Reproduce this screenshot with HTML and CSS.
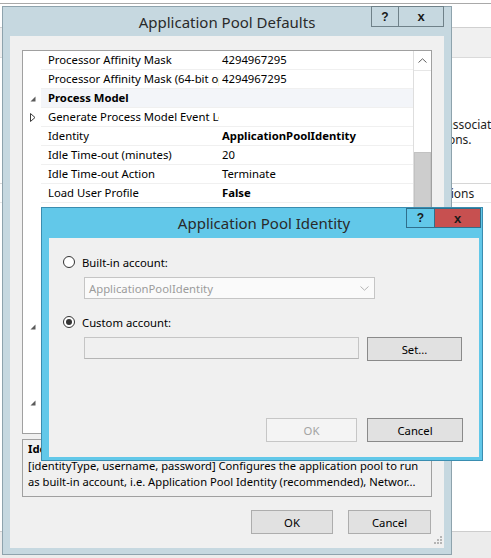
FILE: index.html
```html
<!DOCTYPE html>
<html>
<head>
<meta charset="utf-8">
<link rel="stylesheet" href="styles.css">
</head>
<body>
<div class="desk">
  <div class="bg">
    <div class="bg-top"></div>
    <div class="bg-head"></div>
    <div class="bg-tool"></div>
    <div class="bg-body">
      <div class="bg-line l1">associated with this</div>
      <div class="bg-line l2">actions.</div>
    </div>
    <div class="bg-row"><span class="bg-line l3">Actions</span></div>
    <div class="bg-fill"></div>
    <div class="bg-foot"></div>
  </div>

  <div class="win win-outer">
    <div class="titlebar">
      <div></div>
      <div class="title">Application Pool Defaults</div>
      <div class="tbtns">
        <div class="tb tb-help">?</div>
        <div class="tb tb-close">x</div>
      </div>
    </div>
    <div class="client outer-client">
      <div class="grid">
        <div class="rows">
          <div class="row"><span class="gut"></span><span class="lab">Processor Affinity Mask</span><span class="val">4294967295</span></div>
          <div class="row"><span class="gut"></span><span class="lab">Processor Affinity Mask (64-bit option)</span><span class="val">4294967295</span></div>
          <div class="row cat"><span class="gut"><svg width="6" height="6" viewBox="0 0 6 6"><polygon points="5.5,0.5 5.5,5.5 0.5,5.5" fill="#5a5a5a"/></svg></span><span class="lab b">Process Model</span><span class="val"></span></div>
          <div class="row"><span class="gut"><svg width="6" height="9" viewBox="0 0 6 9"><polygon points="0.5,0.5 5,4.5 0.5,8.5" fill="none" stroke="#3a3a3a" stroke-width="1"/></svg></span><span class="lab">Generate Process Model Event Log Entry</span><span class="val"></span></div>
          <div class="row"><span class="gut"></span><span class="lab">Identity</span><span class="val b">ApplicationPoolIdentity</span></div>
          <div class="row"><span class="gut"></span><span class="lab">Idle Time-out (minutes)</span><span class="val">20</span></div>
          <div class="row"><span class="gut"></span><span class="lab">Idle Time-out Action</span><span class="val">Terminate</span></div>
          <div class="row"><span class="gut"></span><span class="lab">Load User Profile</span><span class="val b">False</span></div>
          <div class="row"><span class="gut"></span><span class="lab">Maximum Worker Processes</span><span class="val">1</span></div>
          <div class="row"><span class="gut"></span><span class="lab">Ping Enabled</span><span class="val">True</span></div>
          <div class="row"><span class="gut"></span><span class="lab">Ping Maximum Response Time (seconds)</span><span class="val">90</span></div>
          <div class="row"><span class="gut"></span><span class="lab">Ping Period (seconds)</span><span class="val">30</span></div>
          <div class="row"><span class="gut"></span><span class="lab">Shutdown Time Limit (seconds)</span><span class="val">90</span></div>
          <div class="row"><span class="gut"></span><span class="lab">Startup Time Limit (seconds)</span><span class="val">90</span></div>
          <div class="row cat"><span class="gut"><svg width="6" height="6" viewBox="0 0 6 6"><polygon points="5.5,0.5 5.5,5.5 0.5,5.5" fill="#5a5a5a"/></svg></span><span class="lab b">Process Orphaning</span><span class="val"></span></div>
          <div class="row"><span class="gut"></span><span class="lab">Enabled</span><span class="val">False</span></div>
          <div class="row"><span class="gut"></span><span class="lab">Executable</span><span class="val"></span></div>
          <div class="row"><span class="gut"></span><span class="lab">Executable Parameters</span><span class="val"></span></div>
          <div class="row cat"><span class="gut"><svg width="6" height="6" viewBox="0 0 6 6"><polygon points="5.5,0.5 5.5,5.5 0.5,5.5" fill="#5a5a5a"/></svg></span><span class="lab b">Rapid-Fail Protection</span><span class="val"></span></div>
          <div class="row"><span class="gut"></span><span class="lab">"Service Unavailable" Response Type</span><span class="val">HttpLevel</span></div>
          <div class="row"><span class="gut"></span><span class="lab">Enabled</span><span class="val">True</span></div>
          <div class="row"><span class="gut"></span><span class="lab">Failure Interval (minutes)</span><span class="val">5</span></div>
        </div>
        <div class="sbar">
          <div class="sb-up"><svg width="9" height="5" viewBox="0 0 9 5"><polyline points="0.5,4.5 4.5,0.8 8.5,4.5" fill="none" stroke="#606060" stroke-width="1"/></svg></div>
          <div class="sb-track"></div>
          <div class="sb-thumb"></div>
        </div>
      </div>
      <div class="desc">
        <div class="desc-title">Identity</div>
        <div class="desc-text">[identityType, username, password] Configures the application pool to run</div>
        <div class="desc-text">as built-in account, i.e. Application Pool Identity (recommended), Networ...</div>
      </div>
      <div class="btnrow outer-btns">
        <div class="btn btn-ok">OK</div>
        <div class="btn btn-cancel">Cancel</div>
      </div>
      <div class="grip"><svg width="10" height="10" viewBox="0 0 10 10"><g fill="#b5b5b5"><rect x="8" y="0" width="2" height="2"/><rect x="5" y="3" width="2" height="2"/><rect x="8" y="3" width="2" height="2"/><rect x="2" y="6" width="2" height="2"/><rect x="5" y="6" width="2" height="2"/><rect x="8" y="6" width="2" height="2"/></g></svg></div>
    </div>
  </div>

  <div class="win win-inner">
    <div class="titlebar inner-titlebar">
      <div></div>
      <div class="title">Application Pool Identity</div>
      <div class="tbtns inner-tbtns">
        <div class="tb itb-help">?</div>
        <div class="tb itb-close">x</div>
      </div>
    </div>
    <div class="client inner-client">
      <div class="radio-row r1"><span class="radio"></span><span>Built-in account:</span></div>
      <div class="combo"><span>ApplicationPoolIdentity</span><svg width="9" height="5" viewBox="0 0 9 5"><polyline points="0.5,0.5 4.5,4.2 8.5,0.5" fill="none" stroke="#b4b4b4" stroke-width="1"/></svg></div>
      <div class="radio-row r2"><span class="radio on"></span><span>Custom account:</span></div>
      <div class="cust-row">
        <div class="textbox"></div>
        <div class="btn ibtn btn-set">Set...</div>
      </div>
      <div class="btnrow inner-btns">
        <div class="btn btn-dis">OK</div>
        <div class="btn ibtn btn-icancel">Cancel</div>
      </div>
    </div>
  </div>
</div>
</body>
</html>
```
FILE: styles.css
```css
* { box-sizing: border-box; }
html, body { margin: 0; padding: 0; }
body {
  width: 491px;
  height: 558px;
  overflow: hidden;
  background: #ffffff;
  font-family: "Noto Sans", "Open Sans", sans-serif;
  font-size: 11.3px;
  color: #000;
}
.desk { position: relative; width: 491px; height: 558px; overflow: hidden; }

/* background window fragments */
.bg { display: flex; flex-direction: column; height: 100%; }
.bg-top { height: 4px; border-bottom: 1px solid #a9a9a9; }
.bg-head { height: 24px; border-bottom: 1px solid #d0d0d0; }
.bg-tool { height: 30px; background: #f0f0f0; border-bottom: 1px solid #dadada; }
.bg-body { height: 125px; padding-top: 59px; }
.bg-line { display: block; white-space: nowrap; line-height: 15px; font-size: 12px; color: #1e1e1e; }
.l1 { padding-left: 446px; }
.l2 { padding-left: 428px; }
.bg-row { height: 20px; border-top: 1px solid #d6d6d6; border-bottom: 1px solid #e6e6e6; display: flex; align-items: center; }
.l3 { padding-left: 433px; }
.bg-fill { flex: 1; }
.bg-foot { height: 27px; background: #ececec; border-top: 1px solid #cdcdcd; }

/* windows */
.win { position: absolute; display: flex; flex-direction: column; }
.win-outer {
  left: 2px; top: 6px; width: 450px; height: 549px;
  background: #c6d8e0;
  border: 1px solid #8ea3ad;
  padding: 0 7px 6px 7px;
}
.titlebar { height: 29px; display: grid; grid-template-columns: 1fr auto 1fr; flex: none; }
.title { align-self: center; font-size: 15px; color: #2a2a2a; white-space: nowrap; }
.tbtns { justify-self: end; align-self: start; display: flex; margin-top: -1px; }
.tb { height: 21px; display: flex; align-items: center; justify-content: center; font-weight: bold; font-size: 12px; color: #1a1a1a; font-family: "Liberation Sans", sans-serif; }
.tb-help { width: 28px; border: 1px solid #6f8189; }
.tb-close { width: 45px; border: 1px solid #6f8189; border-left: none; font-size: 13px; }

.client { background: #f0f0f0; flex: 1; display: flex; flex-direction: column; position: relative; }
.outer-client { padding: 14px 12px 0 12px; }

/* property grid */
.grid { height: 384px; border: 1px solid #a0a0a0; background: #fff; display: flex; overflow: hidden; flex: none; }
.rows { flex: 1; display: flex; flex-direction: column; overflow: hidden; }
.row { height: 19px; flex: none; display: grid; grid-template-columns: 18px 178px 1fr; align-items: center; }
.row .lab, .row .val { height: 19px; line-height: 18px; white-space: nowrap; overflow: hidden; border-bottom: 1px solid #f0f0f0; }
.row .lab { padding-left: 7px; }
.row .val { padding-left: 3px; }
.row.cat .lab, .row.cat .val { background: #f3f5f9; }
.gut { display: flex; align-items: center; justify-content: center; height: 19px; padding-left: 2px; }
.b { font-weight: bold; }

.sbar { width: 18px; border-left: 1px solid #dedede; display: flex; flex-direction: column; background: #fff; }
.sb-up { height: 20px; display: flex; align-items: center; justify-content: center; border-bottom: 1px solid #e6e6e6; }
.sb-track { height: 81px; }
.sb-thumb { height: 200px; background: #cdcdcd; border: 1px solid #c2c2c2; }

/* description */
.desc { margin-top: 5px; height: 58px; border: 1px solid #a0a0a0; padding: 0 5px; flex: none; }
.desc-title { font-weight: bold; line-height: 18px; }
.desc-text { line-height: 16px; white-space: nowrap; overflow: hidden; font-size: 11.2px; }

/* buttons */
.btnrow { display: flex; justify-content: flex-end; flex: none; }
.outer-btns { margin-top: 13px; gap: 15px; padding-right: 1px; }
.btn { height: 24px; display: flex; align-items: center; justify-content: center; background: #e1e1e1; border: 1px solid #adadad; }
.btn-ok { width: 82px; }
.btn-cancel { width: 83px; }
.grip { position: absolute; right: 2px; bottom: 2px; width: 10px; height: 10px; display: flex; }

/* inner dialog */
.win-inner {
  left: 41px; top: 207px; width: 442px; height: 254px;
  background: #62c8e9;
  border: 1px solid #3a8db0;
  padding: 0 3px 3px 7px;
}
.inner-titlebar { height: 30px; }
.inner-tbtns { margin-top: 0; margin-right: -2px; }
.inner-tbtns .tb { height: 20px; }
.itb-help { width: 29px; border: 1px solid #2f6f8c; }
.itb-close { width: 46px; border: 1px solid #2f6f8c; border-left: none; background: #c75050; font-size: 13px; }

.inner-client { padding: 16px 16px 0 14px; }
.radio-row { display: flex; align-items: center; gap: 7px; height: 16px; }
.r2 { margin-top: 15px; }
.radio { width: 12px; height: 12px; border: 1px solid #333; border-radius: 50%; background: #fff; display: flex; align-items: center; justify-content: center; }
.radio.on::after { content: ""; width: 6px; height: 6px; border-radius: 50%; background: #333; }
.combo { margin: 7px 0 0 21px; width: 291px; height: 22px; border: 1px solid #c5c5c5; background: #fafafa; color: #9c9c9c; display: flex; align-items: center; justify-content: space-between; padding: 0 5px 0 4px; }
.cust-row { margin: 7px 0 0 21px; display: flex; align-items: flex-start; gap: 8px; }
.textbox { width: 275px; height: 22px; border: 1px solid #c5c5c5; border-bottom-color: #b5b5b5; background: #f0f0f0; }
.ibtn { border-color: #8a8a8a; }
.btn-set { width: 95px; }
.inner-btns { margin-top: 57px; gap: 10px; }
.btn-dis { width: 91px; background: #f4f4f4; border-color: #c6c6c6; color: #a3a3a3; }
.btn-icancel { width: 96px; }
```
